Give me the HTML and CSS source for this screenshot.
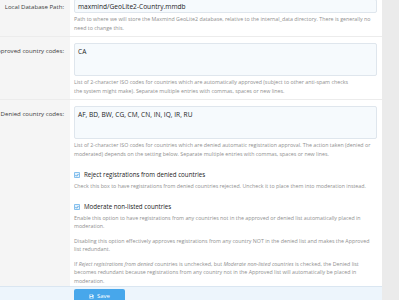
FILE: index.html
```html
<!DOCTYPE html>
<html lang="en">
<head>
    <meta charset="UTF-8">
    <title>Options: Country registration</title>
    <link rel="stylesheet" href="styles.css">
</head>
<body>

    <div class="page">
        <div class="main">
            <div class="form-body">

                <!-- Database path -->
                <dl class="form-row">
                    <dt><label>Local Database Path:</label></dt>
                    <dd>
                        <div class="input">maxmind/GeoLite2-Country.mmdb</div>
                        <div class="explain">Path to where we will store the Maxmind GeoLite2 database, relative to the internal_data directory. There is generally no need to change this.</div>
                    </dd>
                </dl>

                <!-- Approved list -->
                <dl class="form-row sep">
                    <dt><label>Approved country codes:</label></dt>
                    <dd>
                        <div class="input textarea">CA</div>
                        <div class="explain narrower">List of 2-character ISO codes for countries which are automatically approved (subject to other anti-spam checks the system might make). Separate multiple entries with commas, spaces or new lines.</div>
                    </dd>
                </dl>

                <!-- Denied list -->
                <dl class="form-row sep">
                    <dt><label>Denied country codes:</label></dt>
                    <dd>
                        <div class="input textarea">AF, BD, BW, CG, CM, CN, IN, IQ, IR, RU</div>
                        <div class="explain">List of 2-character ISO codes for countries which are denied automatic registration approval. The action taken (denied or moderated) depends on the setting below. Separate multiple entries with commas, spaces or new lines.</div>
                    </dd>
                </dl>

                <!-- Check boxes -->
                <dl class="form-row">
                    <dt></dt>
                    <dd class="checks">
                        <div class="check">
                            <span class="box"><svg viewBox="0 0 8 8" width="6" height="6"><rect x="0.5" y="0.5" width="7" height="7" rx="1" fill="#e6f2fc" stroke="#4aa3e6"/><path d="M2 4.2 L3.4 5.6 L6 2.6" fill="none" stroke="#2f8fd8" stroke-width="1.1"/></svg></span>
                            <span class="check-label">Reject registrations from denied countries</span>
                        </div>
                        <div class="explain">Check this box to have registrations from denied countries rejected. Uncheck it to place them into moderation instead.</div>

                        <div class="check second">
                            <span class="box"><svg viewBox="0 0 8 8" width="6" height="6"><rect x="0.5" y="0.5" width="7" height="7" rx="1" fill="#e6f2fc" stroke="#4aa3e6"/><path d="M2 4.2 L3.4 5.6 L6 2.6" fill="none" stroke="#2f8fd8" stroke-width="1.1"/></svg></span>
                            <span class="check-label">Moderate non-listed countries</span>
                        </div>
                        <div class="explain">
                            <p>Enable this option to have registrations from any countries not in the approved or denied list automatically placed in moderation.</p>
                            <p>Disabling this option effectively approves registrations from any country NOT in the denied list and makes the Approved list redundant.</p>
                            <p class="narrow">If <i>Reject registrations from denied</i> countries is unchecked, but <i>Moderate non-listed countries</i> is checked, the Denied list becomes redundant because registrations from any country not in the Approved list will automatically be placed in moderation.</p>
                        </div>
                    </dd>
                </dl>
            </div>

            <div class="submit-row">
                <button class="button-save">
                    <svg viewBox="0 0 10 10" width="5" height="5"><path d="M1 1 H7.5 L9 2.5 V9 H1 Z" fill="#fff"/><rect x="2.5" y="1.5" width="4" height="2.5" fill="#47a7eb"/><rect x="2.8" y="5.5" width="4.4" height="3" fill="#47a7eb"/></svg>
                    Save
                </button>
            </div>
        </div>
        <div class="sidebar"></div>
    </div>

</body>
</html>
```

FILE: styles.css
```css
body {
    margin: 0;
    padding: 0;
    font-family: 'Open Sans', 'Noto Sans', sans-serif;
    color: #141414;
    background-color: #ebebeb;
    overflow: hidden;
}
.page {
    display: flex;
    height: 300px;
}
.main {
    width: 382px;
    flex: none;
    background-color: #fff;
    display: flex;
    flex-direction: column;
}
.sidebar {
    flex: 1;
    background-color: #ebebeb;
}
.form-body {
    margin-top: -7px;
    height: 293px;
    flex: none;
    display: flex;
    flex-direction: column;
}
.form-row {
    display: flex;
    margin: 0;
}
.form-row:last-child {
    flex: 1;
}
.form-row.sep {
    border-top: 1px solid #ececec;
}
.form-row dt {
    width: 70px;
    flex: none;
    box-sizing: border-box;
    background-color: #f5f5f5;
    padding: 8.5px 6px 0 0;
    display: flex;
    justify-content: flex-end;
    align-items: flex-start;
    font-size: 6.1px;
    line-height: 9px;
    color: #3c3c3c;
    white-space: nowrap;
}
.form-row dd {
    flex: 1;
    margin: 0;
    padding: 6px 5px 4px 4px;
    min-width: 0;
}
.input {
    height: 14px;
    box-sizing: border-box;
    border: 1px solid #dfe6ed;
    border-radius: 2px;
    background-color: #f6fafd;
    padding: 2px 3px;
    font-size: 6.6px;
    line-height: 9px;
    color: #222;
}
.input.textarea {
    height: 33px;
    padding-top: 3px;
}
.explain {
    margin-top: 2px;
    font-size: 5.3px;
    line-height: 8.5px;
    color: #8f8f8f;
}
.explain .narrow {
    padding-right: 16px;
}
.explain.narrower {
    padding-right: 28px;
}
.explain p {
    margin: 0;
}
.explain p + p {
    margin-top: 6px;
}
.checks {
    padding-top: 8px !important;
}
.check {
    display: flex;
    align-items: center;
    gap: 4px;
    font-size: 6.2px;
    line-height: 9px;
}
.check.second {
    margin-top: 11.5px;
}
.check + .explain {
    margin-top: 3px;
}
.check.second + .explain {
    margin-top: 2.5px;
}
.box {
    display: flex;
}
.check-label {
    color: #222;
}
.submit-row {
    flex: 1;
    border-top: 1px solid #dae6f1;
    background-color: #edf5fc;
    padding: 2px 0 0 74px;
}
.button-save {
    width: 51px;
    height: 14px;
    border: none;
    border-radius: 2px;
    background-color: #47a7eb;
    color: #fff;
    font-family: 'Open Sans', sans-serif;
    font-size: 6px;
    display: flex;
    align-items: center;
    justify-content: center;
    gap: 3px;
    padding: 0;
}
```
